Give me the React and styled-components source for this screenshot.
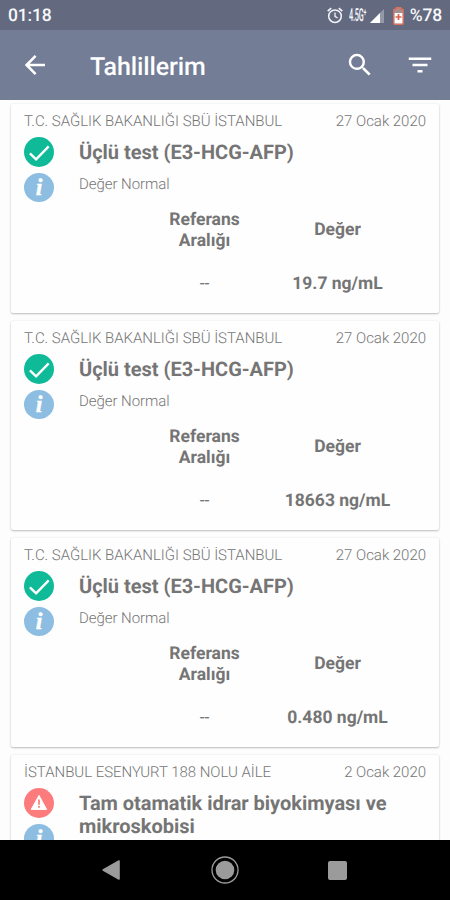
import styled, { createGlobalStyle } from "styled-components";

const results = [
  {
    id: 1,
    place: "T.C. SAĞLIK BAKANLIĞI SBÜ İSTANBUL",
    date: "27 Ocak 2020",
    name: "Üçlü test (E3-HCG-AFP)",
    note: "Değer Normal",
    value: "19.7 ng/mL",
  },
  {
    id: 2,
    place: "T.C. SAĞLIK BAKANLIĞI SBÜ İSTANBUL",
    date: "27 Ocak 2020",
    name: "Üçlü test (E3-HCG-AFP)",
    note: "Değer Normal",
    value: "18663 ng/mL",
  },
  {
    id: 3,
    place: "T.C. SAĞLIK BAKANLIĞI SBÜ İSTANBUL",
    date: "27 Ocak 2020",
    name: "Üçlü test (E3-HCG-AFP)",
    note: "Değer Normal",
    value: "0.480 ng/mL",
  },
  {
    id: 4,
    place: "İSTANBUL ESENYURT 188 NOLU AİLE",
    date: "2 Ocak 2020",
    name: "Tam otamatik idrar biyokimyası ve mikroskobisi",
    warning: true,
  },
];

function AlarmIcon() {
  return (
    <svg width="16" height="17" viewBox="0 0 16 17" fill="none" stroke="#f4f5f8">
      <circle cx="8" cy="9.2" r="6.3" strokeWidth="1.5" />
      <path d="M8 5.6V9.4L10.6 11" strokeWidth="1.3" />
      <path d="M0.7 4.2L4.2 1.1M15.3 4.2L11.8 1.1" strokeWidth="1.6" />
    </svg>
  );
}

function SignalIcon() {
  return (
    <svg width="14" height="14" viewBox="0 0 14 14">
      <path d="M14 0V14H0Z" fill="#9499aa" />
      <path d="M10 4V14H0Z" fill="#fff" />
    </svg>
  );
}

function BatteryIcon() {
  return (
    <svg width="11" height="18" viewBox="0 0 11 18">
      <path
        d="M3.4 0.8h4.2v1.4h1.6q1 0 1 1v13q0 1-1 1H1.8q-1 0-1-1v-13q0-1 1-1h1.6z"
        fill="#a0908f"
        stroke="#e0705c"
        strokeWidth="1.4"
      />
      <path d="M1.6 6h7.8v10.4H1.6z" fill="#fff" />
      <path d="M5.5 7v6M2.5 10h6" stroke="#e2604a" strokeWidth="1.7" />
    </svg>
  );
}

function BackIcon() {
  return (
    <svg width="20" height="20" viewBox="0 0 20 20" fill="none" stroke="#fff">
      <path d="M20 10H2M10.6 0.9L1.6 10L10.6 19.1" strokeWidth="2.5" />
    </svg>
  );
}

function SearchIcon() {
  return (
    <svg width="30" height="30" viewBox="0 0 24 24" fill="#fff">
      <path d="M15.5 14h-.79l-.28-.27A6.471 6.471 0 0 0 16 9.5 6.5 6.5 0 1 0 9.5 16c1.61 0 3.09-.59 4.23-1.57l.27.28v.79l5 4.99L20.49 19l-4.99-5zm-6 0C7.01 14 5 11.99 5 9.5S7.01 5 9.5 5 14 7.01 14 9.5 11.99 14 9.5 14z" />
    </svg>
  );
}

function FilterIcon() {
  return (
    <svg width="30" height="30" viewBox="0 0 24 24" fill="#fff">
      <path d="M10 18h4v-2h-4v2zM3 6v2h18V6H3zm3 7h12v-2H6v2z" />
    </svg>
  );
}

function CheckIcon() {
  return (
    <svg width="30" height="30" viewBox="0 0 30 30">
      <circle cx="15" cy="15" r="15" fill="#0fba98" />
      <path d="M5.9 16.4L12.1 22.3L24.7 9.4" fill="none" stroke="#fff" strokeWidth="2.4" />
    </svg>
  );
}

function WarningIcon() {
  return (
    <svg width="30" height="30" viewBox="0 0 30 30">
      <circle cx="15" cy="15" r="15" fill="#fc7b7d" />
      <path d="M15 7.4L22.6 21.4H7.2Z" fill="#fff" stroke="#fff" strokeLinejoin="round" />
      <path d="M15 11.6V16.8M15 18V19.8" stroke="#fc7b7d" strokeWidth="1.7" />
    </svg>
  );
}

function ResultCard({ result }) {
  return (
    <Card>
      <CardHeader>
        <span>{result.place}</span>
        <span>{result.date}</span>
      </CardHeader>
      <CardBody>
        <Badges>
          {result.warning ? <WarningIcon /> : <CheckIcon />}
          <Info>i</Info>
        </Badges>
        <div>
          <Name>{result.name}</Name>
          {result.note && <Note>{result.note}</Note>}
        </div>
      </CardBody>
      {result.value && (
        <Values>
          <Cell>
            Referans
            <br />
            Aralığı
          </Cell>
          <Cell>Değer</Cell>
          <Cell $light>--</Cell>
          <Cell>{result.value}</Cell>
        </Values>
      )}
    </Card>
  );
}

export default function App() {
  return (
    <Screen>
      <GlobalStyle />
      <StatusBar>
        <Clock>01:18</Clock>
        <AlarmIcon />
        <Network>
          <span>4.5G⁺</span>
        </Network>
        <SignalIcon />
        <Battery>
          <BatteryIcon />
          %78
        </Battery>
      </StatusBar>
      <Toolbar>
        <BackIcon />
        <Title>Tahlillerim</Title>
        <SearchIcon />
        <FilterIcon />
      </Toolbar>
      <List>
        {results.map((result) => (
          <ResultCard key={result.id} result={result} />
        ))}
      </List>
      <NavBar>
        <svg width="20" height="20" viewBox="0 0 20 20">
          <path d="M17 1V19L1.2 10Z" fill="#9b9b9b" stroke="#9b9b9b" strokeLinejoin="round" strokeWidth="1.6" />
        </svg>
        <svg width="28" height="28" viewBox="0 0 28 28">
          <circle cx="14" cy="14" r="13" fill="none" stroke="#9b9b9b" strokeWidth="1.3" />
          <circle cx="14" cy="14" r="9.3" fill="#9b9b9b" />
        </svg>
        <Recents />
      </NavBar>
    </Screen>
  );
}

const GlobalStyle = createGlobalStyle`
  body {
    margin: 0;
  }

  * {
    box-sizing: border-box;
  }

  svg {
    display: block;
    flex-shrink: 0;
  }
`;

const Screen = styled.div`
  display: flex;
  flex-direction: column;
  width: 450px;
  height: 900px;
  overflow: hidden;
  background: #fdfdfd;
  color: #757575;
  font-family: Roboto, sans-serif;
  text-rendering: geometricPrecision;
`;

const StatusBar = styled.header`
  display: flex;
  align-items: center;
  flex-shrink: 0;
  height: 30px;
  padding: 1px 8px 0;
  background: #636a80;
  color: #f7f8fa;
  font-size: 17.5px;
  font-weight: 500;
  letter-spacing: -0.2px;
`;

const Clock = styled.span`
  flex: 1;
`;

const Network = styled.span`
  width: 17px;
  margin: 0 4px 0 6px;
  font-size: 17px;
  letter-spacing: -0.5px;

  > span {
    display: block;
    width: 34px;
    transform: scale(0.43, 1.05);
    transform-origin: left;
  }
`;

const Battery = styled.span`
  display: flex;
  align-items: center;
  gap: 6px;
  margin-left: 9px;
`;

const Toolbar = styled.div`
  display: flex;
  align-items: center;
  flex-shrink: 0;
  height: 70px;
  padding: 0 15px 0 25px;
  background: #737d96;

  > :nth-child(3) {
    margin-right: 30px;
  }
`;

const Title = styled.h1`
  flex: 1;
  margin: 4px 0 0 45px;
  color: #fff;
  font-size: 25px;
  font-weight: 500;
  letter-spacing: -0.1px;
`;

const List = styled.main`
  display: flex;
  flex: 1;
  flex-direction: column;
  gap: 8px;
  min-height: 0;
  padding: 4px 11px 0;
  overflow: hidden;
`;

const Card = styled.article`
  flex-shrink: 0;
  height: 209px;
  padding: 8px 13px 0;
  border-radius: 2px;
  background: #fefefe;
  box-shadow: 0 1px 2px rgba(0, 0, 0, 0.24), 0 0 2px rgba(0, 0, 0, 0.08);
`;

const CardHeader = styled.div`
  display: flex;
  justify-content: space-between;
  height: 18px;
  font-size: 15px;
  font-weight: 300;
  line-height: 18px;
  letter-spacing: -0.03px;
`;

const CardBody = styled.div`
  display: flex;
  gap: 25px;
  height: 72px;
  padding-top: 7px;
`;

const Badges = styled.div`
  display: flex;
  flex-direction: column;
  gap: 6px;
  width: 30px;
`;

const Info = styled.span`
  flex-shrink: 0;
  width: 30px;
  height: 29px;
  border-radius: 50%;
  background: #8dbde1;
  color: #fff;
  font: italic bold 24px / 30px "Liberation Serif", serif;
  -webkit-text-stroke: 0.4px #fff;
  text-align: center;
`;

const Name = styled.h2`
  margin: 4px 0 0;
  font-size: 20px;
  font-weight: 700;
  line-height: 23px;
  letter-spacing: -0.02px;
`;

const Note = styled.p`
  margin: 11px 0 0;
  font-size: 15px;
  font-weight: 300;
  line-height: 18px;
  letter-spacing: -0.05px;
`;

const Values = styled.div`
  display: grid;
  grid-template-columns: 133px 133px;
  grid-template-rows: 57px 50px;
  align-items: center;
  margin-left: 114px;
`;

const Cell = styled.div`
  font-size: 17.5px;
  font-weight: ${(props) => (props.$light ? 400 : 700)};
  line-height: 21px;
  text-align: center;
`;

const NavBar = styled.nav`
  display: flex;
  align-items: center;
  justify-content: space-between;
  flex-shrink: 0;
  height: 60px;
  padding: 0 103px 0 102px;
  background: #000;
`;

const Recents = styled.span`
  width: 19px;
  height: 19px;
  border-radius: 2px;
  background: #9b9b9b;
`;
